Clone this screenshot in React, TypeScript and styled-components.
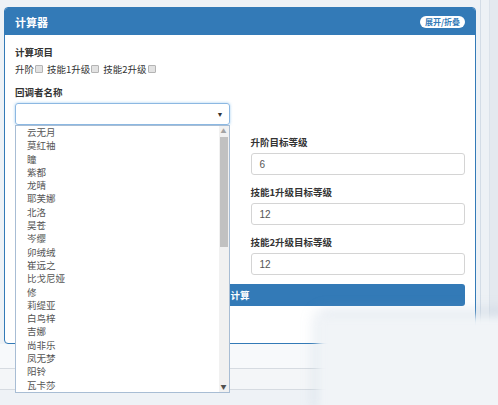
import React from 'react'
import styled, { createGlobalStyle } from 'styled-components'

const GlobalStyle = createGlobalStyle`
  html, body {
    margin: 0;
    padding: 0;
    background: #eef2f6;
    font-family: 'Noto Sans CJK SC', 'Liberation Sans', sans-serif;
  }
`

const NAMES = [
  '云无月', '莫红袖', '瞳', '紫都', '龙晴', '耶芙娜', '北洛', '昊苍', '岑缨', '卯绒绒',
  '崔远之', '比戈尼娅', '修', '莉缇亚', '白鸟梓', '吉娜', '尚非乐', '凤无梦', '阳铃', '瓦卡莎',
]

const TARGETS = [
  { label: '升阶目标等级', value: '6' },
  { label: '技能1升级目标等级', value: '12' },
  { label: '技能2升级目标等级', value: '12' },
]

const Page = styled.div`
  display: flex;
  width: 498px;
  height: 405px;
  overflow: hidden;
  position: relative;
`

const Main = styled.div`
  flex: 1;
  padding: 7px 4px 0 4px;
  display: flex;
  flex-direction: column;
`

const PageScroll = styled.div`
  width: 18px;
  background: #edf1f5;
  border-left: 1px solid #d3dce6;
  box-sizing: border-box;
  display: flex;
  justify-content: flex-end;
  > div {
    width: 8px;
    background: #e4e9ef;
    border-left: 1px solid #dbe2ea;
  }
`

const Panel = styled.div`
  background: #fff;
  border: 1px solid #337ab7;
  border-radius: 4px;
  display: flex;
  flex-direction: column;
`

const Header = styled.div`
  height: 27px;
  background: #337ab7;
  display: flex;
  align-items: center;
  justify-content: space-between;
  padding: 0 10px;
  border-radius: 3px 3px 0 0;
`

const Title = styled.h3`
  margin: 0;
  color: #fff;
  font-size: 11px;
  font-weight: 700;
`

const Toggle = styled.button`
  height: 12px;
  width: 45px;
  padding: 0;
  border: none;
  border-radius: 6px;
  background: #fff;
  color: #337ab7;
  font-family: inherit;
  font-size: 8px;
  font-weight: 700;
  line-height: 12px;
`

const Body = styled.div`
  padding: 9px 10px 37px 10px;
  color: #333;
  font-size: 9.5px;
`

const Label = styled.div`
  font-weight: 700;
  line-height: 16px;
  height: 16px;
`

const CheckRow = styled.div`
  display: flex;
  align-items: center;
  height: 18px;
  margin-bottom: 6px;
`

const CheckItem = styled.label`
  display: flex;
  align-items: center;
  margin-right: 4px;
`

const Box = styled.span`
  width: 6px;
  height: 6px;
  margin-left: 1px;
  border: 1px solid #b4b4b4;
  background: #e2e2e2;
  border-radius: 1px;
`

const Grid = styled.div`
  display: grid;
  grid-template-columns: 1fr 1fr;
  grid-template-rows: repeat(4, 50px) 22px;
  column-gap: 21px;
`

const Field = styled.div<{ $col: number; $row: number }>`
  grid-column: ${({ $col }) => $col};
  grid-row: ${({ $row }) => $row};
  display: flex;
  flex-direction: column;
  gap: 3px;
  position: relative;
`

const Input = styled.div`
  height: 22px;
  box-sizing: border-box;
  border: 1px solid #d4d4d4;
  border-radius: 3px;
  padding: 0 8px;
  display: flex;
  align-items: center;
  font-family: 'Liberation Sans', sans-serif;
  font-size: 10px;
  color: #555;
`

const Select = styled(Input)<{ $open?: boolean }>`
  justify-content: flex-end;
  border-color: ${({ $open }) => ($open ? '#8cb8e2' : '#d4d4d4')};
  box-shadow: ${({ $open }) => ($open ? '0 0 3px rgba(102,175,233,0.6)' : 'none')};
  color: #333;
  font-size: 7px;
  padding-right: 5px;
`

const Dropdown = styled.ul`
  position: absolute;
  top: 41px;
  left: 0;
  right: 0;
  height: 268px;
  margin: 0;
  padding: 0 10px 0 0;
  box-sizing: border-box;
  list-style: none;
  background: #fff;
  border: 1px solid #a8bdd4;
  z-index: 5;
  overflow: hidden;
`

const Option = styled.li`
  height: 13.3px;
  line-height: 13.3px;
  padding-left: 11px;
  color: #555;
  font-size: 9.5px;
`

const ScrollTrack = styled.div`
  position: absolute;
  top: 0;
  right: 0;
  bottom: 0;
  width: 10px;
  background: #f1f1f1;
  display: flex;
  flex-direction: column;
  align-items: center;
  font-size: 6px;
  line-height: 10px;
`

const Arrow = styled.span<{ $dark?: boolean }>`
  color: ${({ $dark }) => ($dark ? '#505050' : '#a3a3a3')};
  height: 10px;
`

const Thumb = styled.div`
  width: 8px;
  height: 110px;
  background: #c1c1c1;
  margin-top: 1px;
`

const TrackFill = styled.div`
  flex: 1;
`

const Submit = styled.button`
  grid-column: 1 / 3;
  grid-row: 5;
  height: 22px;
  border: none;
  border-radius: 3px;
  background: #337ab7;
  color: #fff;
  font-family: inherit;
  font-size: 9.5px;
  font-weight: 700;
`

const FooterRow = styled.div<{ $h: number; $bg: string }>`
  height: ${({ $h }) => $h}px;
  background: ${({ $bg }) => $bg};
  border-bottom: 1px solid #d6dbe1;
  margin: 0 -4px;
`

const Blur = styled.div`
  position: absolute;
  left: 318px;
  top: 316px;
  right: -10px;
  bottom: -10px;
  background: #f1f4f7;
  filter: blur(4px);
  box-shadow: 0 -3px 12px rgba(140, 165, 195, 0.4);
`

export default function App() {
  return (
    <>
      <GlobalStyle />
      <Page>
        <Main>
          <Panel>
            <Header>
              <Title>计算器</Title>
              <Toggle>展开/折叠</Toggle>
            </Header>
            <Body>
              <Label>计算项目</Label>
              <CheckRow>
                <CheckItem>升阶<Box /></CheckItem>
                <CheckItem>技能1升级<Box /></CheckItem>
                <CheckItem>技能2升级<Box /></CheckItem>
              </CheckRow>
              <Grid>
                <Field $col={1} $row={1}>
                  <Label>回调者名称</Label>
                  <Select $open>▼</Select>
                  <Dropdown>
                    {NAMES.map((n) => (
                      <Option key={n}>{n}</Option>
                    ))}
                    <ScrollTrack>
                      <Arrow>▲</Arrow>
                      <Thumb />
                      <TrackFill />
                      <Arrow $dark>▼</Arrow>
                    </ScrollTrack>
                  </Dropdown>
                </Field>
                {TARGETS.map((t, i) => (
                  <Field key={t.label} $col={2} $row={i + 2}>
                    <Label>{t.label}</Label>
                    <Input>{t.value}</Input>
                  </Field>
                ))}
                <Submit>计算</Submit>
              </Grid>
            </Body>
          </Panel>
          <FooterRow $h={24} $bg="#f7f9fb" />
          <FooterRow $h={20} $bg="#f4f6f8" />
        </Main>
        <PageScroll>
          <div />
        </PageScroll>
        <Blur />
      </Page>
    </>
  )
}
